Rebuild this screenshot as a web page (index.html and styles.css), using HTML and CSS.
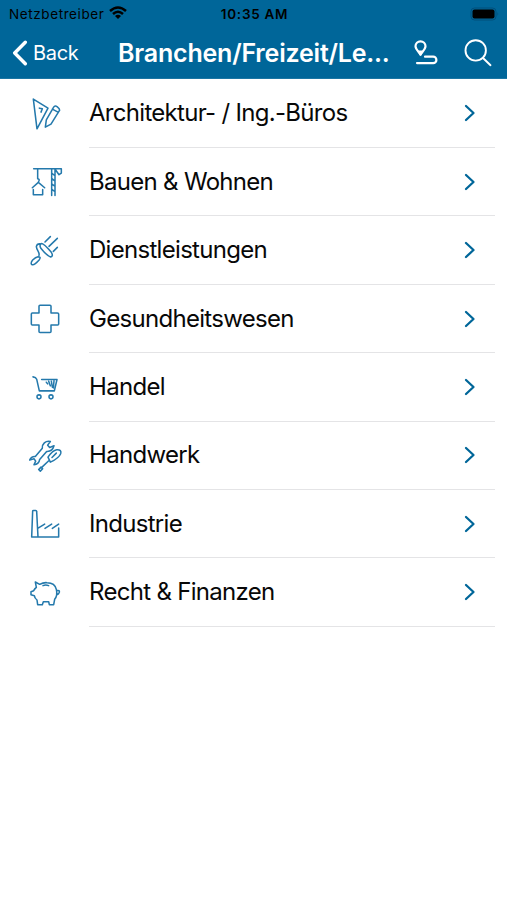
FILE: index.html
```html
<!DOCTYPE html>
<html lang="de">
<head>
<meta charset="utf-8">
<meta name="viewport" content="width=device-width">
<title>Branchen</title>
<link rel="stylesheet" href="styles.css">
</head>
<body>
<header class="header">
  <div class="status">
    <div class="carrier"><span>Netzbetreiber</span>
      <svg width="18" height="14" viewBox="0 0 18 14" fill="none" stroke="#000" stroke-width="2.5"><path d="M1 5Q9-2 17 5M4 8Q9 3.5 14 8"/><path d="M9 13 6 10Q9 7.5 12 10Z" fill="#000" stroke="none"/></svg>
    </div>
    <span class="time">10:35 AM</span>
    <svg class="battery" width="30" height="14" viewBox="0 0 30 14"><rect x="1" y="1" width="25" height="12" rx="3.5" fill="none" stroke="#004f7b"/><rect x="2.500" y="2.6" width="22" height="9" rx="2" fill="#000"/><path d="M27.5 5Q29 7 27.5 9Z" fill="#004f7b"/></svg>
  </div>
  <nav class="nav">
    <a class="back"><svg width="16" height="26" viewBox="0 0 16 26" fill="none" stroke="#fff" stroke-width="3.4" stroke-linecap="round" stroke-linejoin="round"><path d="M13.3 2.2 2.7 13 13.3 23.8"/></svg><span>Back</span></a>
    <h1 class="title">Branchen/Freizeit/Le...</h1>
    <svg class="route" width="26" height="28" viewBox="0 0 26 28" fill="none" stroke="#fff" stroke-width="2.2" stroke-linecap="round" stroke-linejoin="round"><path d="M7.5 15.500C5 12 2.500 10 2.500 7.300a5 5 0 0 1 10 0C12.500 10 10 12 7.500 15.500Z"/><path d="M6 12.500h3l-1.500 3Z" fill="#fff"/><path d="M12 17.700h8.200a3.200 3.200 0 0 1 0 6.400H4"/></svg>
    <svg class="search" width="28" height="28" viewBox="0 0 28 28" fill="none" stroke="#fff" stroke-width="1.900" stroke-linecap="round"><circle cx="11.700" cy="11.400" r="10.200"/><path d="m19 19 7.500 7.200"/></svg>
  </nav>
</header>
<main class="list">
  <div class="row"><svg class="icon" viewBox="0 -5.4 180 180"><path d="M40 40 84 67 51 129ZM58 67l9 2-4 10M101 64q4-6 11-1t7 10L93 115 76 124 79 102ZM97 70l17 9"/></svg><div class="cell"><span class="label">Architektur- / Ing.-Büros</span><svg class="chev" viewBox="0 0 12 18"><path d="m2 2 7.500 7L2 16"/></svg></div></div>
  <div class="row"><svg class="icon" viewBox="0 -4.200 180 180"><path d="M41 46H124V59L117 64 107 50M53 46V76q8 1 2 10M37 103 55 87 74 103M40 108V124H68V108M95 46V126M105 46V126M95 59l10 8M95 75l10 8M95 91l10 8M95 107l10 8"/></svg><div class="cell"><span class="label">Bauen &amp; Wohnen</span><svg class="chev" viewBox="0 0 12 18"><path d="m2 2 7.500 7L2 16"/></svg></div></div>
  <div class="row"><svg class="icon" viewBox="0 -3 180 180"><path d="M75 63 91 47M87 76 112 52M100 91 112 79M63 68C70 66 82 80 94 94Q101 105 92 108C84 105 69 90 62 81Q58 72 63 68ZM62 69Q51 67 49 77C50 88 60 94 57 103M54 107Q64 107 58 116C51 124 40 134 35 130Q31 126 38 117Q47 108 54 107Z"/></svg><div class="cell"><span class="label">Dienstleistungen</span><svg class="chev" viewBox="0 0 12 18"><path d="m2 2 7.500 7L2 16"/></svg></div></div>
  <div class="row"><svg class="icon" viewBox="0 -1.800 180 180"><path d="M60 47H90Q93 47 93 50V70H112Q116 70 116 73V103Q116 106 113 106H93V126Q93 129 90 129H60Q57 129 57 126V106H37Q34 106 34 103V73Q34 70 37 70H57V50Q57 47 60 47Z"/></svg><div class="cell"><span class="label">Gesundheitswesen</span><svg class="chev" viewBox="0 0 12 18"><path d="m2 2 7.500 7L2 16"/></svg></div></div>
  <div class="row"><svg class="icon" viewBox="0 -.6 180 180"><path d="M39 59Q48 60 50 66L58 101H103L111 67H65M79 75l4 5M86 72l5 14M94 72l3 18M102 71l-2 21"/><circle cx="57" cy="119" r="6"/><circle cx="93" cy="119" r="6"/></svg><div class="cell"><span class="label">Handel</span><svg class="chev" viewBox="0 0 12 18"><path d="m2 2 7.500 7L2 16"/></svg></div></div>
  <div class="row"><svg class="icon" viewBox="0 .6 180 180"><path d="M91 47C76 44 66 55 67 67L46 92Q34 91 29 103L42 99 47 106 42 117Q57 116 59 101L80 77Q97 78 102 60L89 65 83 58ZM84 94Q98 74 110 72Q126 71 122 84C116 98 104 103 91 109ZM84 94l7 15M87 104 66 124M63 124l5 5-7 7-5-5ZM96 95l13-13"/></svg><div class="cell"><span class="label">Handwerk</span><svg class="chev" viewBox="0 0 12 18"><path d="m2 2 7.500 7L2 16"/></svg></div></div>
  <div class="row"><svg class="icon" viewBox="0 -1.200 180 180"><path d="M35 128 38 50Q38 48 41 48H47Q50 48 50 51L54 128M35 128H116V101M53 102 74 89M75 102 95 89M97 102 116 89"/></svg><div class="cell"><span class="label">Industrie</span><svg class="chev" viewBox="0 0 12 18"><path d="m2 2 7.500 7L2 16"/></svg></div></div>
  <div class="row"><svg class="icon" viewBox="0 0 180 180"><path d="M46 60 59 67Q70 61 81 62Q105 62 109 82C113 99 109 106 104 112L101 128H88L86 119H70L67 128H53L51 114Q44 109 43 101L33 98V89L41 86Q44 80 49 76ZM69 71Q77 67 86 71M110 86Q120 84 118 91Q116 97 111 98"/></svg><div class="cell"><span class="label">Recht &amp; Finanzen</span><svg class="chev" viewBox="0 0 12 18"><path d="m2 2 7.500 7L2 16"/></svg></div></div>
</main>
</body>
</html>
```
FILE: styles.css
```css
* { box-sizing: border-box; }
body { margin: 0; background: #fff; color: #080808; font-family: Inter, "Liberation Sans", sans-serif; }
svg { display: block; flex: none; }
.header { height: 79px; background: #006699; border-bottom: 1px solid #1b76a4; }
.status { height: 27px; display: grid; grid-template-columns: 1fr auto 1fr; align-items: center; padding: 1px 7px 0 9px; color: #000; font-size: 13.500px; line-height: 26px; }
.carrier { display: flex; align-items: center; gap: 5px; letter-spacing: .6px; }
.carrier svg { margin-top: -2px; }
.time { font-weight: 600; letter-spacing: .7px; }
.battery { justify-self: end; }
.nav { height: 51px; display: flex; align-items: center; color: #fff; padding-left: 12px; }
.back { display: flex; align-items: center; gap: 5px; width: 106px; font-size: 20px; letter-spacing: -.3px; }
.title { margin: 0; width: 295px; font-size: 25px; font-weight: 600; letter-spacing: -.2px; white-space: nowrap; }
.search { margin-left: 25px; }
.list { padding-top: .7px; }
.row { height: 68.400px; display: flex; padding-right: 12px; }
.icon { width: 60px; height: 60px; margin: 4px 9px 0 20px; fill: none; stroke: #2479ac; stroke-width: 4.600; stroke-linecap: round; stroke-linejoin: round; }
.cell { flex: 1; display: flex; align-items: center; justify-content: space-between; border-bottom: 1px solid #e4e4e6; padding-right: 19px; }
.label { font-size: 24px; line-height: 30px; white-space: nowrap; letter-spacing: -.7px; }
.chev { width: 12px; height: 18px; fill: none; stroke: #006699; stroke-width: 2.300; stroke-linecap: round; stroke-linejoin: round; }
```
